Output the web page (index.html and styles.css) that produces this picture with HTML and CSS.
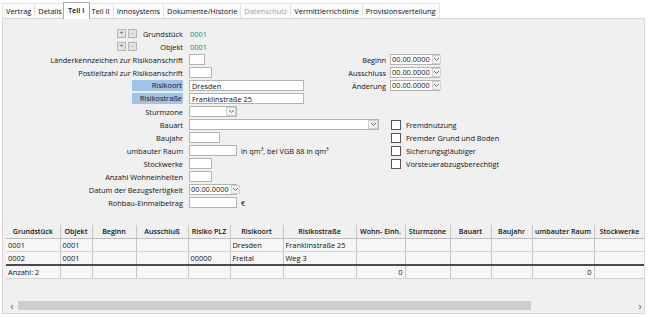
FILE: index.html
```html
<!DOCTYPE html>
<html>
  <head>
    <meta charset="utf-8">
    <title>Teil I</title>
    <link rel="stylesheet" href="styles.css">
  </head>
  <body>
    <div class="tabs">
      <div class="tab">Vertrag</div>
      <div class="tab">Details</div>
      <div class="tab active">Teil I</div>
      <div class="tab">Teil II</div>
      <div class="tab">Innosystems</div>
      <div class="tab">Dokumente/Historie</div>
      <div class="tab disabled">Datenschutz</div>
      <div class="tab">Vermittlerrichtlinie</div>
      <div class="tab">Provisionsverteilung</div>
    </div>

    <div class="panel">
      <div class="form">
        <div class="c1"><span class="pm"><button>+</button><button>-</button></span><span class="pm-text">Grundstück</span></div>
        <div class="c2 key">0001</div>

        <div class="c1"><span class="pm"><button>+</button><button>-</button></span><span class="pm-text">Objekt</span></div>
        <div class="c2 key">0001</div>

        <div class="c1">Länderkennzeichen zur Risikoanschrift</div>
        <div class="c2"><input class="field w16"><span class="side-label">Beginn</span></div>
        <div class="c3"><div class="combo w50"><span class="text">00.00.0000</span><span class="drop"><svg width="7" height="5" viewBox="0 0 7 5"><path d="M1 1l2.5 2.5L6 1" fill="none" stroke="#6a6a6a"/></svg></span></div></div>

        <div class="c1">Postleitzahl zur Risikoanschrift</div>
        <div class="c2"><input class="field w23"><span class="side-label">Ausschluss</span></div>
        <div class="c3"><div class="combo w50"><span class="text">00.00.0000</span><span class="drop"><svg width="7" height="5" viewBox="0 0 7 5"><path d="M1 1l2.5 2.5L6 1" fill="none" stroke="#6a6a6a"/></svg></span></div></div>

        <div class="c1"><span class="hl">Risikoort</span></div>
        <div class="c2"><input class="field w115" value="Dresden"><span class="side-label">Änderung</span></div>
        <div class="c3"><div class="combo w50"><span class="text">00.00.0000</span><span class="drop"><svg width="7" height="5" viewBox="0 0 7 5"><path d="M1 1l2.5 2.5L6 1" fill="none" stroke="#6a6a6a"/></svg></span></div></div>

        <div class="c1"><span class="hl">Risikostraße</span></div>
        <div class="c2"><input class="field w115" value="Franklinstraße 25"></div>

        <div class="c1">Sturmzone</div>
        <div class="c2"><div class="combo w48"><span class="text"></span><span class="drop"><svg width="7" height="5" viewBox="0 0 7 5"><path d="M1 1l2.5 2.5L6 1" fill="none" stroke="#6a6a6a"/></svg></span></div></div>

        <div class="c1">Bauart</div>
        <div class="c2"><div class="combo w190"><span class="text"></span><span class="drop"><svg width="7" height="5" viewBox="0 0 7 5"><path d="M1 1l2.5 2.5L6 1" fill="none" stroke="#6a6a6a"/></svg></span></div></div>
        <div class="c3"><span class="check"></span>Fremdnutzung</div>

        <div class="c1">Baujahr</div>
        <div class="c2"><input class="field w31"></div>
        <div class="c3"><span class="check"></span>Fremder Grund und Boden</div>

        <div class="c1">umbauter Raum</div>
        <div class="c2"><input class="field w48"><span class="unit">in qm³, bei VGB 88 in qm³</span></div>
        <div class="c3"><span class="check"></span>Sicherungsgläubiger</div>

        <div class="c1">Stockwerke</div>
        <div class="c2"><input class="field w23"></div>
        <div class="c3"><span class="check"></span>Vorsteuerabzugsberechtigt</div>

        <div class="c1">Anzahl Wohneinheiten</div>
        <div class="c2"><input class="field w23"></div>

        <div class="c1">Datum der Bezugsfertigkeit</div>
        <div class="c2"><div class="combo w48"><span class="text">00.00.0000</span><span class="drop"><svg width="7" height="5" viewBox="0 0 7 5"><path d="M1 1l2.5 2.5L6 1" fill="none" stroke="#6a6a6a"/></svg></span></div></div>

        <div class="c1">Rohbau-Einmalbetrag</div>
        <div class="c2"><input class="field w48"><span class="unit">€</span></div>
      </div>

      <div class="grid-view">
        <table class="list">
          <colgroup>
            <col style="width:54px"><col style="width:32px"><col style="width:44px"><col style="width:52px">
            <col style="width:42px"><col style="width:53px"><col style="width:73px"><col style="width:49px">
            <col style="width:45px"><col style="width:41px"><col style="width:41px"><col style="width:62px">
            <col style="width:51px">
          </colgroup>
          <thead>
            <tr>
              <th>Grundstück</th><th>Objekt</th><th>Beginn</th><th>Ausschluß</th><th>Risiko PLZ</th>
              <th>Risikoort</th><th>Risikostraße</th><th>Wohn- Einh.</th><th>Sturmzone</th><th>Bauart</th>
              <th>Baujahr</th><th>umbauter Raum</th><th>Stockwerke</th>
            </tr>
          </thead>
          <tbody>
            <tr>
              <td>0001</td><td>0001</td><td></td><td></td><td></td><td>Dresden</td><td>Franklinstraße 25</td>
              <td></td><td></td><td></td><td></td><td></td><td></td>
            </tr>
            <tr class="last">
              <td>0002</td><td>0001</td><td></td><td></td><td>00000</td><td>Freital</td><td>Weg 3</td>
              <td></td><td></td><td></td><td></td><td></td><td></td>
            </tr>
            <tr class="sum">
              <td>Anzahl: 2</td><td></td><td></td><td></td><td></td><td></td><td></td>
              <td class="num">0</td><td></td><td></td><td></td><td class="num">0</td><td></td>
            </tr>
          </tbody>
        </table>
      </div>

      <div class="hscroll">
        <span class="arrow">‹</span>
        <div class="track"><div class="thumb"></div></div>
        <span class="arrow">›</span>
      </div>
    </div>
  </body>
</html>
```

FILE: styles.css
```css
:root {
  --panel-color: #f0f0f0;
  --text-color: #111;
  --key-color: #0e8c8c;
  --highlight: #9fc3ea;
  --field-border: #b3b3b3;
  --grid-line: #c6c6c6;
}

* {
  box-sizing: border-box;
}

body {
  margin: 0;
  background: #fff;
  font-family: "Open Sans", "Noto Sans", sans-serif;
  font-size: 7.4px;
  color: var(--text-color);
}

/*----- TABS -----*/

.tabs {
  display: flex;
  align-items: flex-end;
  height: 18px;
  padding-left: 2px;
}

.tab {
  height: 15px;
  line-height: 14px;
  padding: 0 3px;
  border: 1px solid #e2e2e2;
  border-bottom: none;
  margin-right: -1px;
  background: #fbfbfb;
  white-space: nowrap;
}

.tab.active {
  height: 17px;
  line-height: 15px;
  margin: 0 -1px -1px -2px;
  padding: 0 4px;
  background: #fff;
  border-color: #a9a9a9;
  font-weight: 600;
  position: relative;
  z-index: 1;
}

.tab.active + .tab {
  margin-left: -1px;
}

.tab.disabled {
  color: #a3a3a3;
}

/*----- PANEL -----*/

.panel {
  margin: 0 3px 0 2px;
  height: 296px;
  border: 1px solid #d6d6d6;
  background: var(--panel-color);
  overflow: hidden;
}

.form {
  display: grid;
  grid-template-columns: 180px 195px 1fr;
  grid-auto-rows: 13px;
  column-gap: 6px;
  align-items: center;
  padding-top: 8px;
}

.c1 {
  grid-column: 1;
  display: flex;
  justify-content: flex-end;
  align-items: center;
  white-space: nowrap;
}

.c2 {
  grid-column: 2;
  display: flex;
  align-items: center;
  white-space: nowrap;
}

.c3 {
  grid-column: 3;
  display: flex;
  align-items: center;
  white-space: nowrap;
}

.key {
  color: var(--key-color);
  padding-left: 1px;
}

.pm {
  display: flex;
  gap: 2px;
}

.pm button {
  width: 9px;
  height: 9px;
  padding: 0;
  border: 1px solid #b4b4b4;
  background: #e3e3e3;
  font: inherit;
  font-size: 6px;
  line-height: 7px;
  color: #333;
}

.pm-text {
  width: 46px;
  text-align: right;
}

.hl {
  width: 51px;
  height: 11px;
  line-height: 11px;
  padding-right: 1px;
  text-align: right;
  background: var(--highlight);
}

.field {
  height: 11px;
  border: 1px solid var(--field-border);
  background: #fff;
  font: inherit;
  color: inherit;
  padding: 0 2px;
  outline: none;
}

.w16 { width: 16px; }
.w23 { width: 23px; }
.w31 { width: 31px; }
.w48 { width: 48px; }
.w50 { width: 50px; }
.w115 { width: 115px; }
.w190 { width: 190px; }

.side-label {
  margin-left: auto;
  margin-right: -2px;
}

.unit {
  margin-left: 4px;
}

.combo {
  display: flex;
  height: 11px;
  border: 1px solid var(--field-border);
  background: #fff;
}

.combo .text {
  flex: 1;
  padding: 0 1px;
  line-height: 9px;
}

.combo .drop {
  width: 10px;
  margin: 0 0 0 1px;
  border: 1px solid #d2d2d2;
  background: #f4f4f4;
  display: flex;
  align-items: center;
  justify-content: center;
}

.check {
  width: 10px;
  height: 10px;
  margin: 0 5px 0 1px;
  border: 1px solid #555;
  background: #fff;
}

/*----- GRID -----*/

.grid-view {
  margin: 16px 0 0 3px;
  overflow: hidden;
}

.list {
  width: 639px;
  border-collapse: collapse;
  table-layout: fixed;
}

.list th,
.list td {
  height: 13px;
  padding: 0 2px;
  line-height: 12px;
  white-space: nowrap;
  overflow: hidden;
  border-right: 1px solid var(--grid-line);
  border-bottom: 1px solid #d2d2d2;
}

.list th {
  font-size: 7.1px;
  font-weight: 600;
  text-align: center;
  border-bottom-color: #bdbdbd;
}

.list td {
  text-align: left;
  background: #f6f6f6;
}

.list tr.last td {
  border-bottom: 2px solid #4b4b4b;
}

.list td.num {
  text-align: right;
}

/*----- SCROLLBAR -----*/

.hscroll {
  display: flex;
  align-items: center;
  height: 10px;
  width: 640px;
  margin: 22px 0 0 3px;
}

.arrow {
  width: 12px;
  text-align: center;
  font-size: 10px;
  line-height: 10px;
  color: #555;
}

.track {
  flex: 1;
  height: 9px;
}

.thumb {
  width: 513px;
  height: 9px;
  background: #cdcdcd;
}
```
